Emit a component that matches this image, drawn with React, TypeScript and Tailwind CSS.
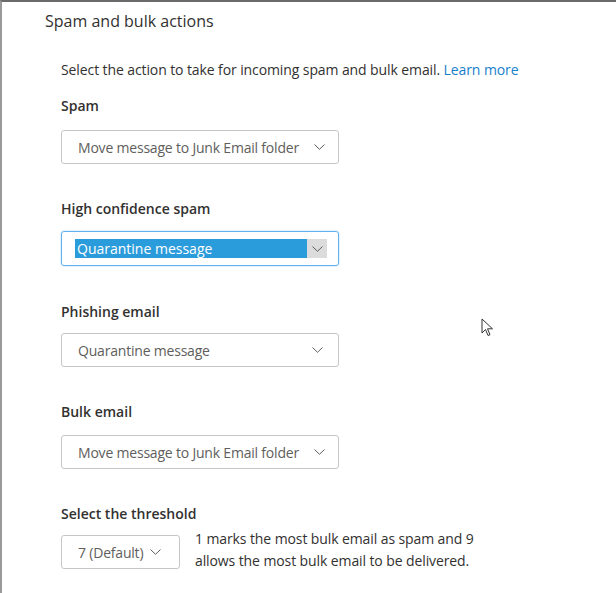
function Chevron({ className = '' }: { className?: string }) {
  return (
    <svg width="11" height="6" viewBox="0 0 11 6" className={className} fill="none">
      <path d="M0.5 0.5 L5.5 5.3 L10.5 0.5" stroke="#605e5c" strokeWidth="1" />
    </svg>
  );
}

function Dropdown({ value, width = 'w-[278px]', pad = 'pr-[13px]' }: { value: string; width?: string; pad?: string }) {
  return (
    <div
      className={`${width} ${pad} h-[34px] border border-[#c8c6c4] rounded-[3px] flex items-center pl-4 justify-between text-[#605e5c]`}
    >
      <span className="whitespace-nowrap tracking-[-0.2px]">{value}</span>
      <Chevron className="ml-[6px] shrink-0" />
    </div>
  );
}

function FocusedDropdown({ value }: { value: string }) {
  return (
    <div className="w-[278px] h-[35px] border border-[#62b0ee] rounded-[3px] shadow-[0_0_2px_#9fd0f7] flex items-center pl-[13px] pr-[11px]">
      <div className="flex-1 h-[19px] bg-[#2b9cdb] text-white flex items-center pl-[2px]">{value}</div>
      <div className="w-[20px] h-[19px] bg-[#dcdcdc] flex items-center justify-center">
        <Chevron />
      </div>
    </div>
  );
}

function Label({ children, className = '' }: { children: React.ReactNode; className?: string }) {
  return <div className={`font-semibold text-[#323130] leading-5 ${className}`}>{children}</div>;
}

export default function App() {
  return (
    <div
      className="relative w-[616px] h-[593px] bg-white border-t-2 border-t-[#6b6b6b] border-l-2 border-l-[#9a9a9a] text-[14px] text-[#323130] overflow-hidden"
      style={{ fontFamily: '"Segoe UI", "Open Sans", sans-serif' }}
    >
      <div className="pl-[43px] pt-[8px]">
        <h2 className="text-[16px] leading-[22px] text-[#323130]">Spam and bulk actions</h2>
      </div>

      <div className="pl-[59px] pt-[28px] flex flex-col">
        <p className="leading-5 tracking-[-0.1px]">
          Select the action to take for incoming spam and bulk email.{' '}
          <a className="text-[#1780cc]">Learn more</a>
        </p>

        <Label className="mt-[16px]">Spam</Label>
        <div className="mt-[14px]">
          <Dropdown value="Move message to Junk Email folder" />
        </div>

        <Label className="mt-[35px]">High confidence spam</Label>
        <div className="mt-[12px]">
          <FocusedDropdown value="Quarantine message" />
        </div>

        <Label className="mt-[36px]">Phishing email</Label>
        <div className="mt-[11px]">
          <Dropdown value="Quarantine message" pad="pr-[15px]" />
        </div>

        <Label className="mt-[35px]">Bulk email</Label>
        <div className="mt-[13px]">
          <Dropdown value="Move message to Junk Email folder" />
        </div>

        <Label className="mt-[35px]">Select the threshold</Label>
        <div className="mt-[11px] flex items-start gap-[15px]">
          <Dropdown value="7 (Default)" width="w-[119px]" pad="pr-[18px]" />
          <p className="leading-[22px] -mt-[7px] text-[#323130] tracking-[-0.1px]">
            1 marks the most bulk email as spam and 9
            <br />
            allows the most bulk email to be delivered.
          </p>
        </div>
      </div>

      {/* mouse cursor */}
      <svg className="absolute left-[479px] top-[316px]" width="14" height="20" viewBox="0 0 14 20">
        <path d="M1 1 L1 15 L4.5 11.5 L7 17.5 L9 16.7 L6.5 10.8 L11.5 10.8 Z" fill="white" stroke="#333" strokeWidth="1" />
      </svg>
    </div>
  );
}
